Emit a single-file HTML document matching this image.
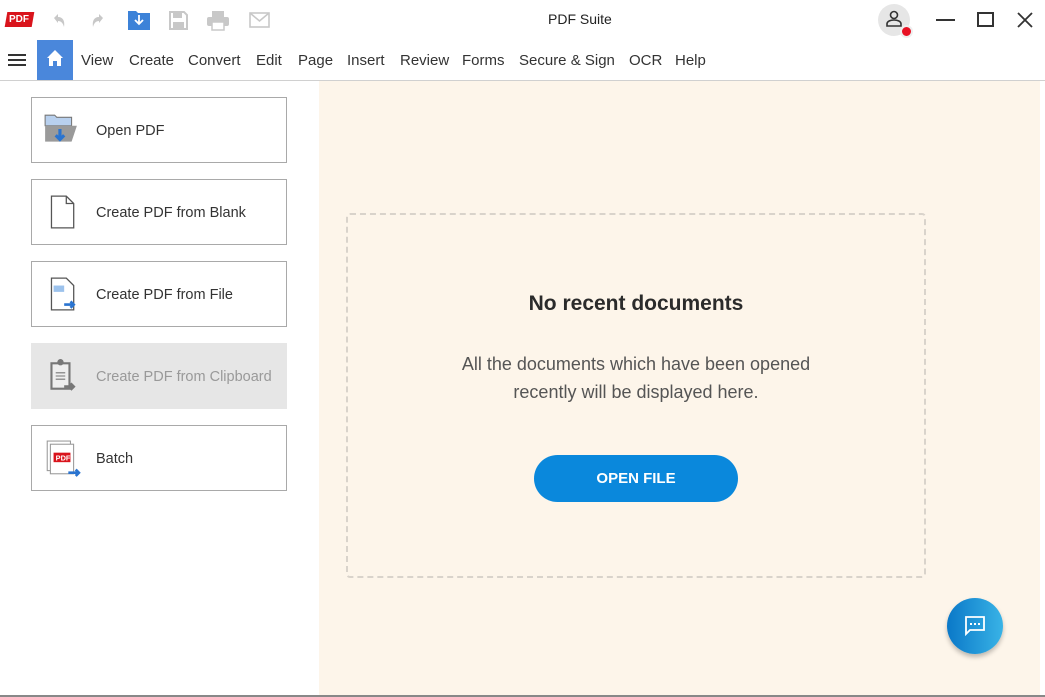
<!DOCTYPE html>
<html><head><meta charset="utf-8"><style>
*{box-sizing:border-box;margin:0;padding:0}
body{width:1045px;height:697px;overflow:hidden;background:#fff;font-family:"Liberation Sans",sans-serif;position:relative;color:#333}
.abs{position:absolute}
.menu span{position:absolute;top:52px;font-size:15px;color:#333}
.btn{position:absolute;left:31px;width:256px;height:66px;border:1px solid #a9a9a9;background:#fff;font-size:14.5px;color:#333}
.btn .t{position:absolute;left:64px;top:25px}
.btn svg{position:absolute;left:10px;top:14px}
</style></head><body>
<!-- title bar -->
<div class="abs" style="left:6px;top:12px;width:27px;height:15px;background:#d9141c;transform:skewX(-10deg)"></div>
<div class="abs" style="left:9px;top:14px;font-size:10px;line-height:11px;font-weight:bold;color:#fff">PDF</div>
<svg class="abs" style="left:50px;top:12px" width="18" height="18" viewBox="0 0 18 18"><path d="M4 6 L8 2 L8 5 C13 5 15 9 14 15 C13 11 11 9 8 9 L8 11 Z" fill="#c8c8c8"/></svg>
<svg class="abs" style="left:89px;top:12px" width="18" height="18" viewBox="0 0 18 18"><path d="M14 6 L10 2 L10 5 C5 5 3 9 4 15 C5 11 7 9 10 9 L10 11 Z" fill="#c8c8c8"/></svg>
<svg class="abs" style="left:128px;top:9px" width="22" height="21" viewBox="0 0 22 21"><path d="M0 2h8l2 2h12v17H0z" fill="#3c82d8"/><path d="M11 6v9m-4-4l4 4 4-4" stroke="#fff" stroke-width="1.8" fill="none"/></svg>
<svg class="abs" style="left:169px;top:11px" width="19" height="19" viewBox="0 0 19 19"><path d="M1 1h14l3 3v14H1z" fill="none" stroke="#c8c8c8" stroke-width="2"/><rect x="4" y="2" width="9" height="5" fill="#c8c8c8"/><rect x="4" y="11" width="11" height="6" fill="#c8c8c8"/></svg>
<svg class="abs" style="left:207px;top:10px" width="22" height="21" viewBox="0 0 22 21"><rect x="5" y="1" width="12" height="6" fill="#c8c8c8"/><rect x="0" y="7" width="22" height="9" rx="2" fill="#c8c8c8"/><rect x="5" y="12" width="12" height="8" fill="#fff" stroke="#c8c8c8" stroke-width="1.5"/></svg>
<svg class="abs" style="left:249px;top:12px" width="21" height="16" viewBox="0 0 21 16"><rect x="1" y="1" width="19" height="14" fill="none" stroke="#c8c8c8" stroke-width="1.6"/><path d="M1 1l9.5 8L20 1" fill="none" stroke="#c8c8c8" stroke-width="1.6"/></svg>
<div class="abs" style="left:548px;top:11px;font-size:14px;color:#222">PDF Suite</div>
<div class="abs" style="left:878px;top:4px;width:32px;height:32px;border-radius:50%;background:#e6e6e6"></div>
<svg class="abs" style="left:885px;top:10px" width="18" height="18" viewBox="0 0 18 18"><circle cx="9" cy="5" r="3.5" fill="none" stroke="#333" stroke-width="1.6"/><path d="M2 16v-2c0-3 4-4 7-4s7 1 7 4v2z" fill="none" stroke="#333" stroke-width="1.6"/></svg>
<div class="abs" style="left:900px;top:25px;width:13px;height:13px;border-radius:50%;background:#e81123;border:2px solid #eee"></div>
<div class="abs" style="left:936px;top:19px;width:19px;height:2px;background:#333"></div>
<div class="abs" style="left:977px;top:12px;width:17px;height:15px;border:2px solid #333"></div>
<svg class="abs" style="left:1017px;top:12px" width="16" height="16" viewBox="0 0 16 16"><path d="M1 1L15 15M15 1L1 15" stroke="#333" stroke-width="1.8"/></svg>
<!-- menu -->
<div class="abs" style="left:8px;top:54px;width:18px;height:2px;background:#333;box-shadow:0 5px 0 #333,0 10px 0 #333"></div>
<div class="abs" style="left:37px;top:40px;width:36px;height:40px;background:#4a87db"></div>
<svg class="abs" style="left:46px;top:49px" width="18" height="18" viewBox="0 0 18 18"><path d="M9 1L1 9h2v8h4v-5h4v5h4V9h2z" fill="#fff"/></svg>
<div class="menu">
<span style="left:81px">View</span><span style="left:129px">Create</span><span style="left:188px">Convert</span><span style="left:256px">Edit</span><span style="left:298px">Page</span><span style="left:347px">Insert</span><span style="left:400px">Review</span><span style="left:462px">Forms</span><span style="left:519px">Secure &amp; Sign</span><span style="left:629px">OCR</span><span style="left:675px">Help</span>
</div>
<div class="abs" style="left:0;top:80px;width:1045px;height:1px;background:#d0d0d0"></div>
<!-- right panel -->
<div class="abs" style="left:319px;top:81px;width:721px;height:614px;background:#fdf5ea"></div>
<div class="abs" style="left:0;top:695px;width:1045px;height:2px;background:#888"></div>
<div class="abs" style="left:346px;top:213px;width:580px;height:365px;border:2px dashed #d9d3cb;border-radius:4px"></div>
<div class="abs" style="left:346px;top:292px;width:580px;text-align:center;font-size:21px;font-weight:bold;color:#2b2b2b">No recent documents</div>
<div class="abs" style="left:346px;top:350px;width:580px;text-align:center;font-size:18px;line-height:28px;color:#555">All the documents which have been opened<br>recently will be displayed here.</div>
<div class="abs" style="left:534px;top:455px;width:204px;height:47px;border-radius:24px;background:#0a88dc;color:#fff;font-weight:bold;font-size:15px;text-align:center;line-height:47px">OPEN FILE</div>
<div class="abs" style="left:947px;top:598px;width:56px;height:56px;border-radius:50%;background:linear-gradient(90deg,#0a78c8,#39b3e6);box-shadow:0 3px 5px rgba(0,0,0,.25)"></div>
<svg class="abs" style="left:965px;top:616px" width="20" height="20" viewBox="0 0 20 20"><path d="M1 1h18v13H5l-4 4z" fill="none" stroke="#fff" stroke-width="1.8"/><rect x="5" y="7" width="2" height="2" fill="#fff"/><rect x="9" y="7" width="2" height="2" fill="#fff"/><rect x="13" y="7" width="2" height="2" fill="#fff"/></svg>
<!-- left buttons -->
<div class="btn" style="top:97px"><svg width="38" height="36" viewBox="0 0 34 34"><path d="M2 3h9l2 2h14v8H2z" fill="#b8d0ee" stroke="#777"/><path d="M2 13h30l-5 15H2z" fill="#9a9a9a"/><path d="M16 16v10m-4-4l4 4 4-4" stroke="#2a74d0" stroke-width="3" fill="none"/></svg><span class="t">Open PDF</span></div>
<div class="btn" style="top:179px"><svg width="38" height="36" viewBox="0 0 34 34"><path d="M8 2h14l7 7v23H8z" fill="#fff" stroke="#555" stroke-width="1.2"/><path d="M22 2v7h7" fill="none" stroke="#555" stroke-width="1.2"/></svg><span class="t">Create PDF from Blank</span></div>
<div class="btn" style="top:261px"><svg width="38" height="36" viewBox="0 0 34 34"><path d="M8 2h14l7 7v23H8z" fill="#fff" stroke="#555" stroke-width="1.2"/><rect x="10" y="9" width="10" height="6" fill="#9cc2ec"/><path d="M20 27h9m-3-3l3 3-3 3" stroke="#2a74d0" stroke-width="2.5" fill="none"/></svg><span class="t">Create PDF from File</span></div>
<div class="btn" style="top:343px;background:#e6e6e6;border-color:#e6e6e6;color:#999"><svg width="38" height="36" viewBox="0 0 34 34"><rect x="8" y="5" width="17" height="24" fill="#eee" stroke="#777" stroke-width="2"/><circle cx="16.5" cy="4" r="3" fill="#777"/><path d="M12 14h9M12 17h9M12 20h9" stroke="#777"/><path d="M20 27h9m-3-3l3 3-3 3" stroke="#777" stroke-width="2.5" fill="none"/></svg><span class="t">Create PDF from Clipboard</span></div>
<div class="btn" style="top:425px"><svg width="40" height="38" viewBox="0 0 36 36"><rect x="4" y="1" width="22" height="28" fill="#fff" stroke="#999"/><rect x="7" y="4" width="22" height="28" fill="#fff" stroke="#999"/><rect x="10" y="12" width="16" height="9" fill="#d9141c"/><text x="12" y="19.5" font-size="7" font-weight="bold" fill="#fff" font-family="Liberation Sans">PDF</text><path d="M24 31h10m-3-3l3 3-3 3" stroke="#2a74d0" stroke-width="2.5" fill="none"/></svg><span class="t">Batch</span></div>
</body></html>
